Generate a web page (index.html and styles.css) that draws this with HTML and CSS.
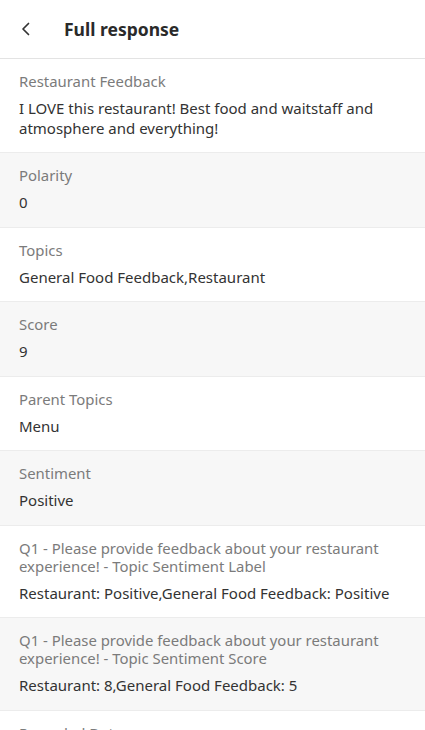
FILE: index.html
```html
<!DOCTYPE html>
<html lang="en">
<head>
<meta charset="utf-8">
<title>Full response</title>
<link rel="stylesheet" href="styles.css">
</head>
<body>
<header class="header">
  <span class="back" aria-label="Back">
    <svg width="12" height="16" viewBox="0 0 12 16"><path d="M8.5 2.5 L3 8 L8.5 13.5" fill="none" stroke="#333" stroke-width="1.7" stroke-linecap="round" stroke-linejoin="round"/></svg>
  </span>
  <h1 class="title">Full response</h1>
</header>
<main class="list">
  <section class="row">
    <div class="label">Restaurant Feedback</div>
    <div class="value">I LOVE this restaurant! Best food and waitstaff and atmosphere and everything!</div>
  </section>
  <section class="row alt">
    <div class="label">Polarity</div>
    <div class="value">0</div>
  </section>
  <section class="row">
    <div class="label">Topics</div>
    <div class="value">General Food Feedback,Restaurant</div>
  </section>
  <section class="row alt">
    <div class="label">Score</div>
    <div class="value">9</div>
  </section>
  <section class="row">
    <div class="label">Parent Topics</div>
    <div class="value">Menu</div>
  </section>
  <section class="row alt">
    <div class="label">Sentiment</div>
    <div class="value">Positive</div>
  </section>
  <section class="row">
    <div class="label">Q1 - Please provide feedback about your restaurant experience! - Topic Sentiment Label</div>
    <div class="value">Restaurant: Positive,General Food Feedback: Positive</div>
  </section>
  <section class="row alt">
    <div class="label">Q1 - Please provide feedback about your restaurant experience! - Topic Sentiment Score</div>
    <div class="value">Restaurant: 8,General Food Feedback: 5</div>
  </section>
  <section class="row">
    <div class="label">Recorded Date</div>
    <div class="value">&nbsp;</div>
  </section>
</main>
</body>
</html>
```
FILE: styles.css
```css
* { box-sizing: border-box; }
html, body { margin: 0; padding: 0; }
body {
  font-family: "Noto Sans", "Open Sans", sans-serif;
  background: #ffffff;
  color: #333;
  width: 425px;
}
.header {
  height: 59px;
  display: flex;
  align-items: center;
  padding-left: 20px;
  border-bottom: 1px solid #e3e3e3;
  box-shadow: 0 1px 2px rgba(0,0,0,0.04);
}
.back {
  display: flex;
  align-items: center;
  width: 44px;
  height: 20px;
}
.title {
  margin: 0;
  font-size: 17.5px;
  font-weight: 700;
  color: #2a2a2a;
}
.list { display: flex; flex-direction: column; }
.row {
  padding: 13px 19px 14px 19px;
  border-bottom: 1px solid #ececec;
  background: #ffffff;
}
.row.alt { background: #f7f7f7; }
.label {
  font-size: 14.9px;
  line-height: 18px;
  color: #7b7b7b;
}
.value {
  margin-top: 9px;
  font-size: 15px;
  line-height: 19.5px;
  color: #333;
}
```
